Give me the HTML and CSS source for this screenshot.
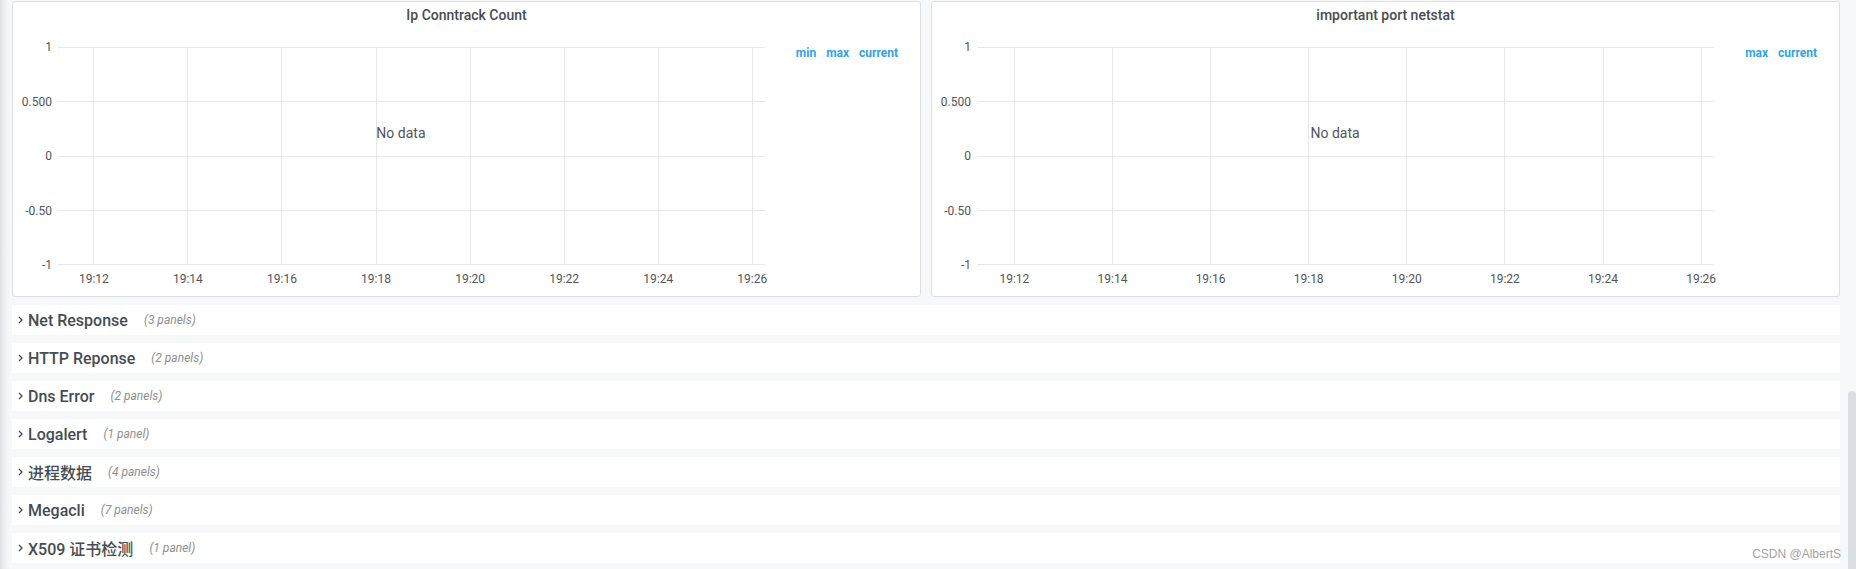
FILE: index.html
```html
<!DOCTYPE html>
<html lang="zh-CN">
<head>
  <meta charset="UTF-8">
  <meta name="viewport" content="width=device-width, initial-scale=1.0">
  <title>Dashboard</title>
  <link rel="stylesheet" href="styles.css">
</head>
<body>
  <div class="layout">
    <div class="edge"></div>
    <div class="main">
      <div class="panels">
        <!-- panel 1 -->
        <div class="panel">
          <div class="panel-title">Ip Conntrack Count</div>
          <div class="panel-body">
            <div class="chart">
              <div class="yaxis">
                <span>1</span><span>0.500</span><span>0</span><span>-0.50</span><span>-1</span>
              </div>
              <div class="plot">
                <div class="hlines"><i></i><i></i><i></i><i></i><i></i></div>
                <div class="vlines"><i></i><i></i><i></i><i></i><i></i><i></i><i></i><i></i></div>
                <div class="nodata">No data</div>
              </div>
              <div class="xaxis">
                <span>19:12</span><span>19:14</span><span>19:16</span><span>19:18</span>
                <span>19:20</span><span>19:22</span><span>19:24</span><span>19:26</span>
              </div>
            </div>
            <div class="legend">
              <span>min</span><span>max</span><span>current</span>
            </div>
          </div>
        </div>
        <!-- panel 2 -->
        <div class="panel">
          <div class="panel-title">important port netstat</div>
          <div class="panel-body">
            <div class="chart">
              <div class="yaxis">
                <span>1</span><span>0.500</span><span>0</span><span>-0.50</span><span>-1</span>
              </div>
              <div class="plot">
                <div class="hlines"><i></i><i></i><i></i><i></i><i></i></div>
                <div class="vlines"><i></i><i></i><i></i><i></i><i></i><i></i><i></i><i></i></div>
                <div class="nodata">No data</div>
              </div>
              <div class="xaxis">
                <span>19:12</span><span>19:14</span><span>19:16</span><span>19:18</span>
                <span>19:20</span><span>19:22</span><span>19:24</span><span>19:26</span>
              </div>
            </div>
            <div class="legend">
              <span>max</span><span>current</span>
            </div>
          </div>
        </div>
      </div>

      <div class="rows">
        <div class="row">
          <svg class="chevron" width="5" height="8" viewBox="0 0 5 8"><path d="M1 1 L4 4 L1 7" fill="none" stroke="#464c54" stroke-width="1.3"/></svg>
          <span class="row-title">Net Response</span><span class="row-count">(3 panels)</span>
        </div>
        <div class="row">
          <svg class="chevron" width="5" height="8" viewBox="0 0 5 8"><path d="M1 1 L4 4 L1 7" fill="none" stroke="#464c54" stroke-width="1.3"/></svg>
          <span class="row-title">HTTP Reponse</span><span class="row-count">(2 panels)</span>
        </div>
        <div class="row">
          <svg class="chevron" width="5" height="8" viewBox="0 0 5 8"><path d="M1 1 L4 4 L1 7" fill="none" stroke="#464c54" stroke-width="1.3"/></svg>
          <span class="row-title">Dns Error</span><span class="row-count">(2 panels)</span>
        </div>
        <div class="row">
          <svg class="chevron" width="5" height="8" viewBox="0 0 5 8"><path d="M1 1 L4 4 L1 7" fill="none" stroke="#464c54" stroke-width="1.3"/></svg>
          <span class="row-title">Logalert</span><span class="row-count">(1 panel)</span>
        </div>
        <div class="row">
          <svg class="chevron" width="5" height="8" viewBox="0 0 5 8"><path d="M1 1 L4 4 L1 7" fill="none" stroke="#464c54" stroke-width="1.3"/></svg>
          <span class="row-title">进程数据</span><span class="row-count">(4 panels)</span>
        </div>
        <div class="row">
          <svg class="chevron" width="5" height="8" viewBox="0 0 5 8"><path d="M1 1 L4 4 L1 7" fill="none" stroke="#464c54" stroke-width="1.3"/></svg>
          <span class="row-title">Megacli</span><span class="row-count">(7 panels)</span>
        </div>
        <div class="row">
          <svg class="chevron" width="5" height="8" viewBox="0 0 5 8"><path d="M1 1 L4 4 L1 7" fill="none" stroke="#464c54" stroke-width="1.3"/></svg>
          <span class="row-title">X509 证书检测</span><span class="row-count">(1 panel)</span>
        </div>
      </div>
    </div>
  </div>

  <div class="scrollbar"></div>
  <div class="watermark">CSDN @AlbertS</div>
</body>
</html>
```

FILE: styles.css
```css
body {
  margin: 0;
  height: 569px;
  overflow: hidden;
  background: #f7f8fa;
  font-family: Roboto, "Noto Sans CJK SC", sans-serif;
  color: #464c54;
}
.layout {
  display: flex;
  height: 100%;
}
.edge {
  flex: none;
  width: 9px;
  background: linear-gradient(to right, #dcdee2, #eceef1 40%, #f5f6f8);
}
.main {
  flex: 1;
  padding: 1px 16px 0 3px;
}

/* panels */
.panels {
  display: grid;
  grid-template-columns: 1fr 1fr;
  gap: 10px;
}
.panel {
  background: #fff;
  border: 1px solid #dce0e6;
  border-radius: 3px;
  height: 294px;
}
.panel-title {
  text-align: center;
  font-size: 14px;
  font-weight: 500;
  line-height: 26px;
  color: #464c54;
}
.panel-body {
  display: flex;
}
.chart {
  flex: 1;
  display: grid;
  grid-template-columns: 39px 1fr;
  grid-template-rows: 218px 31px;
  column-gap: 6px;
  padding-top: 19px;
}
.yaxis {
  display: flex;
  flex-direction: column;
  justify-content: space-between;
  margin: -7px 0;
  text-align: right;
  font-size: 12px;
  line-height: 14px;
  color: #52545c;
}
.plot {
  display: grid;
}
.plot > * {
  grid-area: 1 / 1;
}
.hlines {
  display: flex;
  flex-direction: column;
  justify-content: space-between;
}
.hlines i {
  display: block;
  height: 1px;
  background: #e8e8e8;
}
.vlines {
  display: flex;
  justify-content: space-between;
  padding: 0 1.7% 0 5%;
}
.vlines i {
  display: block;
  width: 1px;
  background: #e8e8e8;
}
.nodata {
  justify-self: center;
  align-self: start;
  margin: 78px 21px 0 0;
  font-size: 14px;
  line-height: 16px;
  color: #52545c;
}
.xaxis {
  grid-column: 2;
  display: flex;
  justify-content: space-between;
  padding: 7px 1.7% 0 5%;
  font-size: 12px;
  line-height: 14px;
  color: #52545c;
}
.xaxis span {
  width: 1px;
  display: flex;
  justify-content: center;
  white-space: nowrap;
}
.legend {
  display: flex;
  align-items: flex-start;
  gap: 10px;
  padding: 18px 22px 0 31px;
  font-size: 12px;
  font-weight: 700;
  line-height: 14px;
  color: #33a2e5;
}

/* collapsed rows */
.rows {
  display: flex;
  flex-direction: column;
  gap: 8px;
  margin-top: 8px;
}
.row {
  display: flex;
  align-items: center;
  height: 30px;
  background: #fff;
  padding-left: 6px;
}
.chevron {
  flex: none;
}
.row-title {
  margin-left: 5px;
  font-size: 16px;
  font-weight: 500;
  color: #464c54;
}
.row-count {
  margin-left: 16px;
  font-size: 12px;
  font-style: italic;
  color: #8e8e8e;
}

.scrollbar {
  position: absolute;
  right: 0;
  top: 391px;
  width: 8px;
  height: 178px;
  background: #dadde1;
  border-radius: 4px 4px 0 0;
}
.watermark {
  position: absolute;
  right: 15px;
  top: 546px;
  font-family: "Liberation Sans", "Noto Sans CJK SC", sans-serif;
  font-size: 12px;
  line-height: 16px;
  color: #a3a3a3;
}
```
